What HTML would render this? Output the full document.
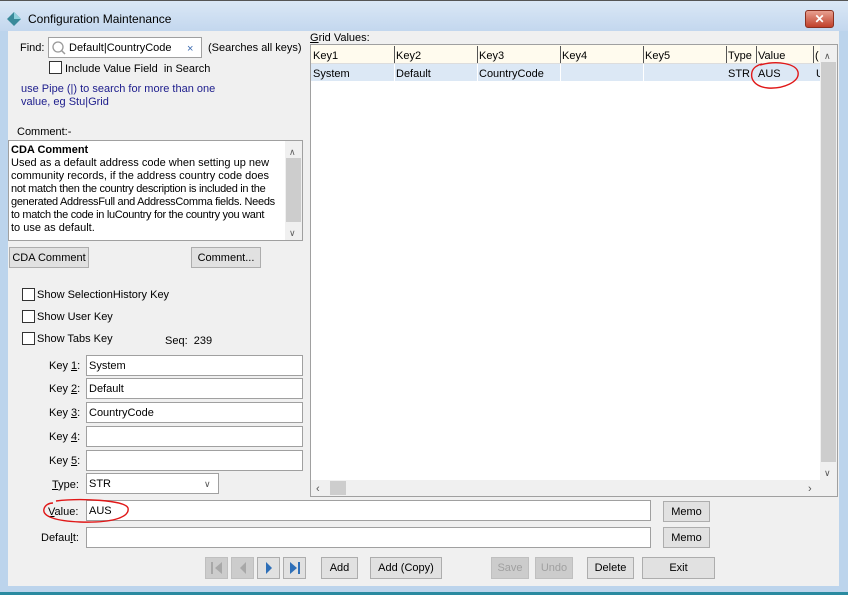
<!DOCTYPE html>
<html><head><style>
*{box-sizing:border-box;margin:0;padding:0}
body{width:848px;height:595px;position:relative;overflow:hidden;background:#bcd4ec;font-family:"Liberation Sans",sans-serif;font-size:11px;color:#000}
.a{position:absolute}
.t{position:absolute;white-space:nowrap;line-height:13px;margin-top:1px}
.in{position:absolute;background:#fff;border:1px solid #a0a0a0;padding:3px 2px 0;line-height:14px;white-space:nowrap}
.btn{position:absolute;background:#e1e1e1;border:1px solid #adadad;text-align:center;line-height:20px;white-space:nowrap}
.cb{position:absolute;width:13px;height:13px;border:1px solid #333;background:#fff}
.dis{color:#a0a0a0;background:#ccc;border-color:#bfbfbf}
</style></head><body>
<div class="a" style="left:0;top:0;width:848px;height:31px;background:linear-gradient(#dbe8f6,#c3d7ee)"></div>
<div class="a" style="left:0;top:0;width:848px;height:1px;background:#555"></div>
<svg class="a" style="left:7px;top:12px" width="14" height="14"><polygon points="7,0 14,7 7,14 0,7" fill="#3a8a9a"/><polygon points="7,0 14,7 7,7" fill="#8fd0dc"/></svg>
<div class="t" style="left:28px;top:12px;font-size:12px">Configuration Maintenance</div>
<div class="a" style="left:805px;top:10px;width:29px;height:18px;background:linear-gradient(#e8a090,#c0402a);border:1px solid #8a3020;border-radius:3px;color:#fff;text-align:center;font-weight:bold;font-size:12px;line-height:16px">✕</div>
<div class="a" style="left:8px;top:31px;width:831px;height:555px;background:#f0f0f0"></div>

<div class="t" style="left:20px;top:41px">Find:</div>
<div class="in" style="left:48px;top:37px;width:154px;height:21px;padding-left:20px">Default|CountryCode</div>
<svg class="a" style="left:51px;top:40px" width="16" height="16"><circle cx="7" cy="7" r="5" fill="none" stroke="#999" stroke-width="1.3"/><line x1="10.5" y1="10.5" x2="14" y2="14" stroke="#999" stroke-width="1.5"/></svg>
<div class="t" style="left:187px;top:42px;color:#3a6ab0">×</div>
<div class="t" style="left:208px;top:41px">(Searches all keys)</div>
<div class="cb" style="left:49px;top:61px"></div>
<div class="t" style="left:65px;top:62px">Include Value Field &nbsp;in Search</div>
<div class="t" style="left:21px;top:82px;color:#1c1c8c">use Pipe (|) to search for more than one</div>
<div class="t" style="left:21px;top:95px;color:#1c1c8c">value, eg Stu|Grid</div>
<div class="t" style="left:17px;top:125px">Comment:-</div>
<div class="a" style="left:8px;top:140px;width:295px;height:101px;background:#fff;border:1px solid #a0a0a0"></div>
<div class="a" style="left:11px;top:144px;width:274px;line-height:13px;white-space:nowrap;overflow:hidden">
<b>CDA Comment</b><br>Used as a default address code when setting up new<br>community records, if the address country code does<br><span style="letter-spacing:-0.3px">not match then the country description is included in the</span><br><span style="letter-spacing:-0.3px">generated AddressFull and AddressComma fields. Needs</span><br><span style="letter-spacing:-0.3px">to match the code in luCountry for the country you want</span><br>to use as default.</div>
<div class="a" style="left:285px;top:141px;width:17px;height:99px;background:#f0f0f0"></div>
<div class="a" style="left:286px;top:158px;width:15px;height:64px;background:#cdcdcd"></div>
<div class="t" style="left:289px;top:145px;color:#606060;font-size:9px">∧</div>
<div class="t" style="left:289px;top:226px;color:#606060;font-size:9px">∨</div>

<div class="btn" style="left:9px;top:247px;width:80px;height:21px">CDA Comment</div>
<div class="btn" style="left:191px;top:247px;width:70px;height:21px">Comment...</div>
<div class="cb" style="left:22px;top:288px"></div><div class="t" style="left:37px;top:288px">Show SelectionHistory Key</div>
<div class="cb" style="left:22px;top:310px"></div><div class="t" style="left:37px;top:310px">Show User Key</div>
<div class="cb" style="left:22px;top:332px"></div><div class="t" style="left:37px;top:332px">Show Tabs Key</div>
<div class="t" style="left:165px;top:334px">Seq: &nbsp;239</div>

<div class="t" style="left:49px;top:359px">Key <u>1</u>:</div><div class="in" style="left:86px;top:355px;width:217px;height:21px">System</div>
<div class="t" style="left:49px;top:382px">Key <u>2</u>:</div><div class="in" style="left:86px;top:378px;width:217px;height:21px">Default</div>
<div class="t" style="left:49px;top:406px">Key <u>3</u>:</div><div class="in" style="left:86px;top:402px;width:217px;height:21px">CountryCode</div>
<div class="t" style="left:49px;top:430px">Key <u>4</u>:</div><div class="in" style="left:86px;top:426px;width:217px;height:21px"></div>
<div class="t" style="left:49px;top:454px">Key <u>5</u>:</div><div class="in" style="left:86px;top:450px;width:217px;height:21px"></div>
<div class="t" style="left:52px;top:478px"><u>T</u>ype:</div><div class="in" style="left:86px;top:473px;width:133px;height:21px">STR</div>
<div class="t" style="left:204px;top:477px;color:#555;font-size:9px">∨</div>

<div class="a" style="left:310px;top:44px;width:528px;height:453px;border:1px solid #a0a0a0;background:#fff"></div>
<div class="t" style="left:310px;top:31px"><u>G</u>rid Values:</div>
<div class="a" style="left:311px;top:45px;width:509px;height:19px;background:#fffbee;border-bottom:1px solid #ddd"></div>
<div class="a" style="left:311px;top:64px;width:509px;height:17px;background:#dce8f5"></div>
<div class="t" style="left:313px;top:49px">Key1</div><div class="t" style="left:396px;top:49px">Key2</div><div class="t" style="left:479px;top:49px">Key3</div><div class="t" style="left:562px;top:49px">Key4</div><div class="t" style="left:645px;top:49px">Key5</div><div class="t" style="left:728px;top:49px">Type</div><div class="t" style="left:758px;top:49px">Value</div><div class="t" style="left:815px;top:49px">(</div>
<div class="a" style="left:394px;top:46px;width:1px;height:17px;background:#555"></div><div class="a" style="left:477px;top:46px;width:1px;height:17px;background:#555"></div><div class="a" style="left:560px;top:46px;width:1px;height:17px;background:#555"></div><div class="a" style="left:643px;top:46px;width:1px;height:17px;background:#555"></div><div class="a" style="left:726px;top:46px;width:1px;height:17px;background:#555"></div><div class="a" style="left:756px;top:46px;width:1px;height:17px;background:#555"></div><div class="a" style="left:813px;top:46px;width:1px;height:17px;background:#555"></div>
<div class="a" style="left:394px;top:64px;width:1px;height:17px;background:#fff"></div><div class="a" style="left:477px;top:64px;width:1px;height:17px;background:#fff"></div><div class="a" style="left:560px;top:64px;width:1px;height:17px;background:#fff"></div><div class="a" style="left:643px;top:64px;width:1px;height:17px;background:#fff"></div>
<div class="t" style="left:313px;top:67px">System</div><div class="t" style="left:396px;top:67px">Default</div><div class="t" style="left:479px;top:67px">CountryCode</div><div class="t" style="left:728px;top:67px">STR</div><div class="t" style="left:758px;top:67px">AUS</div><div class="t" style="left:816px;top:67px">U</div>
<div class="a" style="left:820px;top:45px;width:17px;height:435px;background:#f0f0f0"></div>
<div class="a" style="left:821px;top:62px;width:15px;height:400px;background:#cdcdcd"></div>
<div class="t" style="left:824px;top:49px;font-size:9px;color:#555">∧</div>
<div class="t" style="left:824px;top:466px;font-size:9px;color:#555">∨</div>
<div class="a" style="left:311px;top:480px;width:509px;height:16px;background:#f0f0f0"></div>
<div class="a" style="left:330px;top:481px;width:16px;height:14px;background:#cdcdcd"></div>
<div class="t" style="left:316px;top:482px;color:#555">‹</div><div class="t" style="left:808px;top:482px;color:#555">›</div>
<div class="a" style="left:820px;top:480px;width:17px;height:16px;background:#f0f0f0"></div>
<svg class="a" style="left:748px;top:60px" width="54" height="32"><path d="M12,5 C30,0 48,4 50,12 C52,22 35,29 20,28 C8,27 2,20 4,12 C5,8 9,5 14,4" fill="none" stroke="#e01818" stroke-width="1.4"/></svg>

<div class="t" style="left:48px;top:505px"><u>V</u>alue:</div>
<div class="in" style="left:86px;top:500px;width:565px;height:21px">AUS</div>
<svg class="a" style="left:40px;top:498px" width="92" height="28"><path d="M16,3 C40,0 85,2 88,10 C90,20 70,25 40,24 C15,23 2,18 4,11 C5,7 9,5 13,5" fill="none" stroke="#e01818" stroke-width="1.4"/></svg>
<div class="btn" style="left:663px;top:501px;width:47px;height:21px">Memo</div>
<div class="t" style="left:41px;top:531px">Defau<u>l</u>t:</div>
<div class="in" style="left:86px;top:527px;width:565px;height:21px"></div>
<div class="btn" style="left:663px;top:527px;width:47px;height:21px">Memo</div>

<div class="btn dis" style="left:205px;top:557px;width:23px;height:22px"></div>
<svg class="a" style="left:210px;top:561px" width="14" height="14"><rect x="1" y="1" width="2" height="12" fill="#a8a8a8"/><polygon points="12,1 5,7 12,13" fill="#a8a8a8"/></svg>
<div class="btn dis" style="left:231px;top:557px;width:23px;height:22px"></div>
<svg class="a" style="left:236px;top:561px" width="14" height="14"><polygon points="10,1 4,7 10,13" fill="#a8a8a8"/></svg>
<div class="btn" style="left:257px;top:557px;width:23px;height:22px"></div>
<svg class="a" style="left:262px;top:561px" width="14" height="14"><polygon points="4,1 10,7 4,13" fill="#2e6fb8"/></svg>
<div class="btn" style="left:283px;top:557px;width:23px;height:22px"></div>
<svg class="a" style="left:288px;top:561px" width="14" height="14"><polygon points="2,1 9,7 2,13" fill="#2e6fb8"/><rect x="10" y="1" width="2" height="12" fill="#2e6fb8"/></svg>
<div class="btn" style="left:321px;top:557px;width:37px;height:22px">Add</div>
<div class="btn" style="left:370px;top:557px;width:72px;height:22px">Add (Copy)</div>
<div class="btn dis" style="left:491px;top:557px;width:38px;height:22px">Save</div>
<div class="btn dis" style="left:535px;top:557px;width:38px;height:22px">Undo</div>
<div class="btn" style="left:587px;top:557px;width:47px;height:22px">Delete</div>
<div class="btn" style="left:642px;top:557px;width:73px;height:22px">Exit</div>
<div class="a" style="left:0;top:592px;width:848px;height:3px;background:#2a8aa0"></div>
</body></html>
